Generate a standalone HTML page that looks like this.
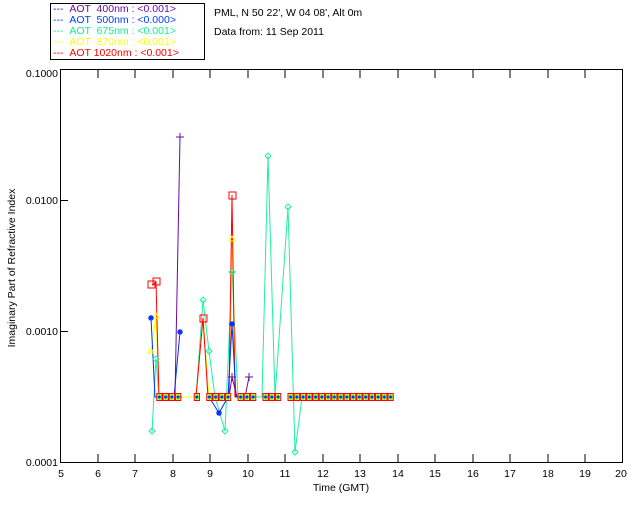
<!DOCTYPE html>
<html><head><style>
html,body{margin:0;padding:0;background:#fff;width:640px;height:512px;overflow:hidden}
svg{display:block}
text{font-family:"Liberation Sans",sans-serif;font-size:10.5px}
</style></head><body>
<svg width="640" height="512" viewBox="0 0 640 512" xmlns="http://www.w3.org/2000/svg">
<defs>
<pattern id="sq" x="0" y="393" width="6.25" height="8" patternUnits="userSpaceOnUse">
<rect x="0" y="0" width="6.25" height="8" fill="#ffff00"/>
<rect x="0.5" y="0.5" width="5.25" height="7" fill="none" stroke="#ff0000" stroke-width="1"/>
<path d="M3.1 1.5 L5.2 4 L3.1 6.5 L1 4Z" fill="none" stroke="#20e890" stroke-width="0.8"/>
<circle cx="3.1" cy="4" r="1.4" fill="#0030ff"/>
</pattern>
</defs>
<rect x="50.5" y="3.5" width="154" height="56" fill="none" stroke="#000"/>
<g>
<text x="53" y="12" fill="#6a0aa8">--- &#160;AOT &#160;400nm : &lt;0.001&gt;</text>
<text x="53" y="23" fill="#0040ff">--- &#160;AOT &#160;500nm : &lt;0.000&gt;</text>
<text x="53" y="34" fill="#10f090">--- &#160;AOT &#160;675nm : &lt;0.001&gt;</text>
<text x="53" y="45" fill="#ffff00">--- &#160;AOT &#160;870nm : &lt;0.001&gt;</text>
<text x="53" y="56" fill="#ff0000">--- &#160;AOT 1020nm : &lt;0.001&gt;</text>
</g>
<text x="214" y="16" fill="#000">PML, N 50 22', W 04 08', Alt 0m</text>
<text x="214" y="35" fill="#000">Data from: 11 Sep 2011</text>
<rect x="60.5" y="69.5" width="562" height="393" fill="none" stroke="#000"/>
<g stroke="#000">
<path d="M60 200.5h8M60 331.5h8"/>
<path d="M98 462v-8M135 462v-8M173 462v-8M210 462v-8M248 462v-8M285 462v-8M323 462v-8M360 462v-8M398 462v-8M435 462v-8M473 462v-8M510 462v-8M548 462v-8M585 462v-8"/>
<path d="M98 70v8M135 70v8M173 70v8M210 70v8M248 70v8M285 70v8M323 70v8M360 70v8M398 70v8M435 70v8M473 70v8M510 70v8M548 70v8M585 70v8"/>
</g>
<g text-anchor="end" fill="#000">
<text x="58" y="77">0.1000</text>
<text x="58" y="204">0.0100</text>
<text x="58" y="335">0.0010</text>
<text x="58" y="466">0.0001</text>
</g>
<g text-anchor="middle" fill="#000">
<text x="61" y="477">5</text><text x="98" y="477">6</text><text x="135" y="477">7</text><text x="173" y="477">8</text><text x="210" y="477">9</text><text x="248" y="477">10</text><text x="285" y="477">11</text><text x="323" y="477">12</text><text x="360" y="477">13</text><text x="398" y="477">14</text><text x="435" y="477">15</text><text x="473" y="477">16</text><text x="510" y="477">17</text><text x="548" y="477">18</text><text x="585" y="477">19</text><text x="621" y="477">20</text>
<text x="341" y="491">Time (GMT)</text>
<text transform="translate(15,268) rotate(-90)">Imaginary Part of Refractive Index</text>
</g>
<g fill="none" stroke-width="1">
<polyline stroke="#20f0a0" points="152,432 156,359 159,397 182,397"/>
<polyline stroke="#20f0a0" points="196,397 203,300 209,351 215,397 225,431 232,272 238,397 262,397 268,156 275,397 288,207 295,452 302,397 394,397"/>
<polyline stroke="#ffff00" points="151,352 156,316 159,397 196,397 203,318 209,397 229,397 232,239 236,397"/>
<polyline stroke="#ff0000" points="152,285 156,282 159,397 182,397"/>
<polyline stroke="#ff0000" points="196,397 203,318 208,397 229,397 232,195 235,397 250,397"/>
<polyline stroke="#0030ff" points="151,318 155,397 174,397 180,332"/>
<polyline stroke="#0030ff" points="209,397 219,413 228,397 232,324 236,397"/>
<polyline stroke="#6a0aa8" points="175,397 180,137"/>
<polyline stroke="#6a0aa8" points="229,397 232,377 237,397"/>
<polyline stroke="#6a0aa8" points="245,397 249,377"/>
</g>
<g fill="url(#sq)">
<rect x="156.25" y="393" width="25" height="8"/>
<rect x="193.75" y="393" width="6.25" height="8"/>
<rect x="206.25" y="393" width="25" height="8"/>
<rect x="237.5" y="393" width="18.75" height="8"/>
<rect x="256.25" y="393" width="0" height="8"/>
<rect x="258.75" y="393" width="0" height="8"/>
<rect x="262.5" y="393" width="18.75" height="8"/>
<rect x="287.5" y="393" width="106.25" height="8"/>
</g>
<g fill="none" stroke-width="1">
<g stroke="#ff0000">
<rect x="148" y="281" width="7" height="7"/><rect x="153" y="278" width="7" height="7"/>
<rect x="200" y="315" width="7" height="7"/><rect x="229" y="192" width="7" height="7"/>
</g>
<g stroke="#20f0a0">
<path d="M152 428l3 3-3 3-3-3z M156 356l3 3-3 3-3-3z M203 297l3 3-3 3-3-3z M209 348l3 3-3 3-3-3z M225 428l3 3-3 3-3-3z M232 269l3 3-3 3-3-3z M268 153l3 3-3 3-3-3z M288 204l3 3-3 3-3-3z M295 449l3 3-3 3-3-3z"/>
</g>
<g stroke="#ffff00"><path d="M151 348l3 5h-6z M156 313l3 5h-6z M232 236l3 5h-6z"/></g>
<g stroke="#0030ff" stroke-width="1.3"><path d="M148 318h6M151 315v6M149 316l4 4M153 316l-4 4 M177 332h6M180 329v6M178 330l4 4M182 330l-4 4 M216 413h6M219 410v6M217 411l4 4M221 411l-4 4 M229 324h6M232 321v6M230 322l4 4M234 322l-4 4"/></g>
<g stroke="#6a0aa8"><path d="M176 137h8M180 133v8 M228 377h8M232 373v8 M245 377h8M249 373v8"/></g>
</g>
</svg>
</body></html>
